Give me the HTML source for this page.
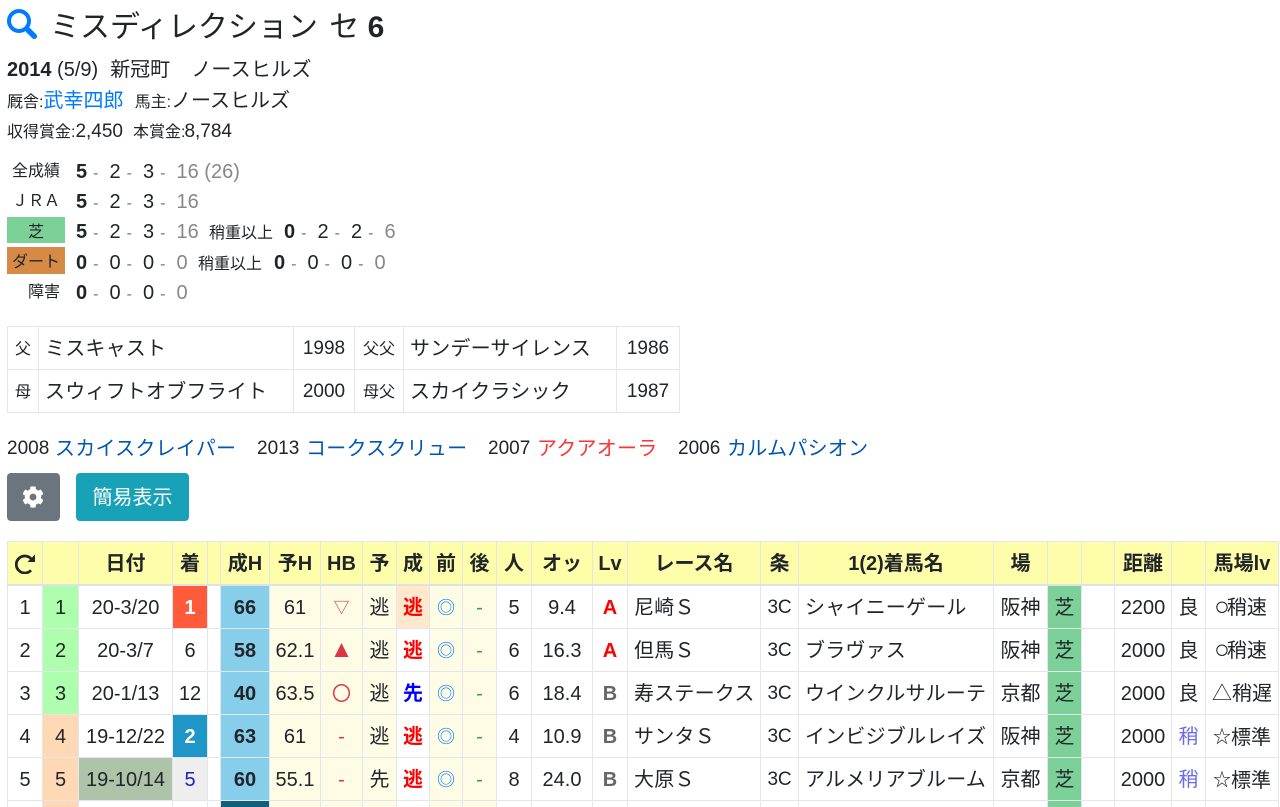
<!DOCTYPE html>
<html lang="ja"><head><meta charset="utf-8"><title>ミスディレクション</title>
<style>
html,body{margin:0;padding:0;background:#fff;width:1280px;height:807px;overflow:hidden}
#w{width:1280px;height:807px;overflow:hidden;position:relative;color:#212529;font:20px/30px "Liberation Sans","Noto Sans CJK JP",sans-serif}
.l{position:absolute;white-space:nowrap}
small{font-size:16px}
a{color:#007bff;text-decoration:none}
.c{display:inline-block;width:33.5px}
.c s{text-decoration:none;font-size:16px;color:#6c757d;margin-left:6px}
.g{color:#888}
.x19{font-size:19px}
.ka{letter-spacing:.25px}
.lab{position:absolute;left:7px;width:53px;height:27px;text-align:right;font-size:16px;line-height:30px;white-space:nowrap}
.pt{position:absolute;left:7px;top:326px;border-collapse:collapse;table-layout:fixed;width:672px}
.pt td{border:1px solid #e3e6ea;height:40px;padding:2px 0 0 6px;white-space:nowrap;letter-spacing:.2px}
.pt .s{font-size:16px;padding:3px 0 0;height:39px;text-align:center;letter-spacing:0}
.pt .y{padding:2px 0 0;text-align:center;font-size:19px;letter-spacing:0}
.btn{position:absolute;top:473px;height:48px;border-radius:4px}
.t{position:absolute;left:7px;top:541px;border-collapse:collapse;table-layout:fixed;width:1271px}
.t th,.t td{border:1px solid #e3e6ea;padding:0;text-align:center;white-space:nowrap;overflow:hidden}
.t th{background:#fdfdaa;height:41px;padding-top:1px;border-bottom:2px solid #dee2e6;font-weight:700}
.t td{height:40px;padding-top:2px}
.t td.n{text-align:left;padding-left:6px;letter-spacing:.2px}
.p{background:#fffce6}
.h{background:#87ceeb;font-weight:700}
.r{color:#f00;font-weight:700}
.b{color:#00f;font-weight:700}
.m{color:#dc3545}
.w{color:#007bff;font-size:18px}
.d{color:#28a745}
.A{color:#f00;font-weight:700}
.B{color:#666;font-weight:700}
.z{background:#7bd197}
.k{background:#adffad}
.o{background:#ffd9b5}
.y2{color:#6a6aee}
.x{font-size:19px;letter-spacing:-.2px}
.st{font-size:18px;vertical-align:1px}
.ci{font-size:26px;line-height:20px;margin:0 -3px;vertical-align:-1px}
</style></head><body><div id="w">

<svg style="position:absolute;left:0;top:0" width="44" height="44" viewBox="0 0 44 44"><circle cx="19" cy="21" r="10" fill="none" stroke="#007bff" stroke-width="4"/><path d="M28 30L34.3 36.3" stroke="#007bff" stroke-width="5.5" stroke-linecap="round" fill="none"/></svg>
<div class="l" style="left:50px;top:7px;font-size:30px;line-height:42px;word-spacing:3px">ミスディレクション セ <b style="margin-left:-3px">6</b></div>
<div class="l" style="left:7px;top:55px"><b>2014</b> (5/9)<span style="margin-left:12px">新冠町</span><span style="margin-left:21px" class="ka">ノースヒルズ</span></div>
<div class="l" style="left:7px;top:86px"><small>厩舎:</small><a href="#">武幸四郎</a>&nbsp;&nbsp;<small>馬主:</small>ノースヒルズ</div>
<div class="l" style="left:7px;top:116px"><small>収得賞金:</small><span class="x19">2,450</span><small style="margin-left:10px">本賞金:</small><span class="x19" style="margin-left:-1px">8,784</span></div>

<div class="lab" style="top:157px">全成績</div>
<div class="l" style="left:76px;top:157px"><span class="c"><b>5</b><s>-</s></span><span class="c">2<s>-</s></span><span class="c">3<s>-</s></span><span class="g">16 (26)</span></div>
<div class="lab" style="top:187px">ＪＲＡ</div>
<div class="l" style="left:76px;top:187px"><span class="c"><b>5</b><s>-</s></span><span class="c">2<s>-</s></span><span class="c">3<s>-</s></span><span class="g">16</span></div>
<div class="lab" style="top:217px;background:#7bd197;text-align:center;width:58px;line-height:31px;height:26px">芝</div>
<div class="l" style="left:76px;top:217px"><span class="c"><b>5</b><s>-</s></span><span class="c">2<s>-</s></span><span class="c">3<s>-</s></span><span class="g">16</span></div>
<div class="l" style="left:209px;top:217px"><small>稍重以上</small></div>
<div class="l" style="left:284px;top:217px"><span class="c"><b>0</b><s>-</s></span><span class="c">2<s>-</s></span><span class="c">2<s>-</s></span><span class="g">6</span></div>
<div class="lab" style="top:247px;background:#d68a45;text-align:center;width:58px;line-height:32px;height:27px">ダート</div>
<div class="l" style="left:76px;top:248px"><span class="c"><b>0</b><s>-</s></span><span class="c">0<s>-</s></span><span class="c">0<s>-</s></span><span class="g">0</span></div>
<div class="l" style="left:198px;top:248px"><small>稍重以上</small></div>
<div class="l" style="left:274px;top:248px"><span class="c"><b>0</b><s>-</s></span><span class="c">0<s>-</s></span><span class="c">0<s>-</s></span><span class="g">0</span></div>
<div class="lab" style="top:278px">障害</div>
<div class="l" style="left:76px;top:278px"><span class="c"><b>0</b><s>-</s></span><span class="c">0<s>-</s></span><span class="c">0<s>-</s></span><span class="g">0</span></div>

<table class="pt">
<colgroup><col style="width:31px"><col style="width:255px"><col style="width:61px"><col style="width:49px"><col style="width:213px"><col style="width:63px"></colgroup>
<tr><td class="s">父</td><td>ミスキャスト</td><td class="y">1998</td><td class="s">父父</td><td>サンデーサイレンス</td><td class="y">1986</td></tr>
<tr><td class="s">母</td><td>スウィフトオブフライト</td><td class="y">2000</td><td class="s">母父</td><td>スカイクラシック</td><td class="y">1987</td></tr>
</table>

<div class="l x19" style="left:7px;top:434px">2008</div><div class="l ka" style="left:55px;top:434px;color:#0056b3">スカイスクレイパー</div>
<div class="l x19" style="left:257px;top:434px">2013</div><div class="l ka" style="left:306px;top:434px;color:#0056b3">コークスクリュー</div>
<div class="l x19" style="left:488px;top:434px">2007</div><div class="l ka" style="left:537px;top:434px;color:#f33">アクアオーラ</div>
<div class="l x19" style="left:678px;top:434px">2006</div><div class="l ka" style="left:727px;top:434px;color:#0056b3">カルムパシオン</div>

<div class="btn" style="left:7px;width:53px;background:#6c757d"><svg style="position:absolute;left:15px;top:13px" width="22" height="22" viewBox="0 0 512 512"><path fill="#fff" d="M487.4 315.7l-42.6-24.6c4.3-23.2 4.3-47 0-70.2l42.6-24.6c4.9-2.8 7.1-8.6 5.5-14-11.1-35.6-30-67.8-54.7-94.6-3.8-4.1-10-5.1-14.8-2.3L380.8 110c-17.9-15.4-38.5-27.3-60.8-35.1V25.8c0-5.6-3.9-10.5-9.4-11.7-36.7-8.2-74.3-7.8-109.2 0-5.5 1.2-9.4 6.1-9.4 11.7V75c-22.2 7.9-42.8 19.8-60.8 35.1L88.7 85.5c-4.9-2.8-11-1.9-14.8 2.3-24.7 26.7-43.6 58.9-54.7 94.6-1.7 5.4.6 11.2 5.5 14L67.3 221c-4.3 23.2-4.3 47 0 70.2l-42.6 24.6c-4.9 2.8-7.1 8.6-5.5 14 11.1 35.6 30 67.8 54.7 94.6 3.8 4.1 10 5.1 14.8 2.3l42.6-24.6c17.9 15.4 38.5 27.3 60.8 35.1v49.2c0 5.6 3.9 10.5 9.4 11.7 36.7 8.2 74.3 7.8 109.2 0 5.5-1.2 9.4-6.1 9.4-11.7v-49.2c22.2-7.9 42.8-19.8 60.8-35.1l42.6 24.6c4.9 2.8 11 1.9 14.8-2.3 24.7-26.7 43.6-58.9 54.7-94.6 1.5-5.5-.7-11.3-5.6-14.1zM256 336c-44.1 0-80-35.9-80-80s35.9-80 80-80 80 35.9 80 80-35.9 80-80 80z"/></svg></div>
<div class="btn" style="left:76px;width:113px;background:#17a2b8;color:#fff;text-align:center;line-height:51px">簡易表示</div>

<table class="t">
<colgroup><col style="width:35px"><col style="width:36px"><col style="width:94px"><col style="width:35px"><col style="width:13px"><col style="width:49px"><col style="width:51px"><col style="width:42px"><col style="width:34px"><col style="width:33px"><col style="width:33px"><col style="width:34px"><col style="width:35px"><col style="width:61px"><col style="width:35px"><col style="width:133px"><col style="width:38px"><col style="width:195px"><col style="width:54px"><col style="width:34px"><col style="width:33px"><col style="width:57px"><col style="width:34px"><col style="width:73px"></colgroup>
<tr><th><svg width="20" height="20" viewBox="0 0 20 20" style="display:block;margin:0 auto"><path d="M16 16.3A8.5 8.5 0 1 1 16.3 5" fill="none" stroke="#212529" stroke-width="2.8"/><path d="M20 0.5V8H12.5Z" fill="#212529"/></svg></th><th></th><th>日付</th><th>着</th><th></th><th>成H</th><th>予H</th><th>HB</th><th>予</th><th>成</th><th>前</th><th>後</th><th>人</th><th>オッ</th><th>Lv</th><th>レース名</th><th>条</th><th>1(2)着馬名</th><th>場</th><th></th><th></th><th>距離</th><th></th><th>馬場lv</th></tr>
<tr><td>1</td><td class="k">1</td><td>20-3/20</td><td style="background:#ff5b3b;color:#fff;font-weight:700">1</td><td></td><td class="h">66</td><td class="p">61</td><td class="p m"><span style="font-size:16px">▽</span></td><td class="p">逃</td><td style="background:#ffe8cc"><span class="r">逃</span></td><td class="p w">◎</td><td class="p d">-</td><td>5</td><td>9.4</td><td class="A">A</td><td class="n">尼崎Ｓ</td><td class="x">3C</td><td class="n">シャイニーゲール</td><td>阪神</td><td class="z">芝</td><td></td><td>2200</td><td>良</td><td><span class="ci">○</span>稍速</td></tr>
<tr><td>2</td><td class="k">2</td><td>20-3/7</td><td>6</td><td></td><td class="h">58</td><td class="p">62.1</td><td class="p m"><span style="font-size:24px;line-height:24px">▲</span></td><td class="p">逃</td><td><span class="r">逃</span></td><td class="p w">◎</td><td class="p d">-</td><td>6</td><td>16.3</td><td class="A">A</td><td class="n">但馬Ｓ</td><td class="x">3C</td><td class="n">ブラヴァス</td><td>阪神</td><td class="z">芝</td><td></td><td>2000</td><td>良</td><td><span class="ci">○</span>稍速</td></tr>
<tr><td>3</td><td class="k">3</td><td>20-1/13</td><td>12</td><td></td><td class="h">40</td><td class="p">63.5</td><td class="p m"><span style="font-size:19px">〇</span></td><td class="p">逃</td><td><span class="b">先</span></td><td class="p w">◎</td><td class="p d">-</td><td>6</td><td>18.4</td><td class="B">B</td><td class="n">寿ステークス</td><td class="x">3C</td><td class="n">ウインクルサルーテ</td><td>京都</td><td class="z">芝</td><td></td><td>2000</td><td>良</td><td>△稍遅</td></tr>
<tr><td>4</td><td class="o">4</td><td>19-12/22</td><td style="background:#1e96c8;color:#fff;font-weight:700">2</td><td></td><td class="h">63</td><td class="p">61</td><td class="p m">-</td><td class="p">逃</td><td><span class="r">逃</span></td><td class="p w">◎</td><td class="p d">-</td><td>4</td><td>10.9</td><td class="B">B</td><td class="n">サンタＳ</td><td class="x">3C</td><td class="n">インビジブルレイズ</td><td>阪神</td><td class="z">芝</td><td></td><td>2000</td><td class="y2">稍</td><td><span class="st">☆</span>標準</td></tr>
<tr><td>5</td><td class="o">5</td><td style="background:#adc4a8">19-10/14</td><td style="background:#eee;color:#2222bb">5</td><td></td><td class="h">60</td><td class="p">55.1</td><td class="p m">-</td><td class="p">先</td><td><span class="r">逃</span></td><td class="p w">◎</td><td class="p d">-</td><td>8</td><td>24.0</td><td class="B">B</td><td class="n">大原Ｓ</td><td class="x">3C</td><td class="n">アルメリアブルーム</td><td>京都</td><td class="z">芝</td><td></td><td>2000</td><td class="y2">稍</td><td><span class="st">☆</span>標準</td></tr>
<tr><td></td><td class="o"></td><td></td><td></td><td></td><td style="background:#0f5f7f"></td><td class="p"></td><td class="p"></td><td class="p"></td><td></td><td class="p"></td><td class="p"></td><td></td><td></td><td></td><td></td><td></td><td></td><td></td><td class="z"></td><td></td><td></td><td></td><td></td></tr>
</table>
</div></body></html>
